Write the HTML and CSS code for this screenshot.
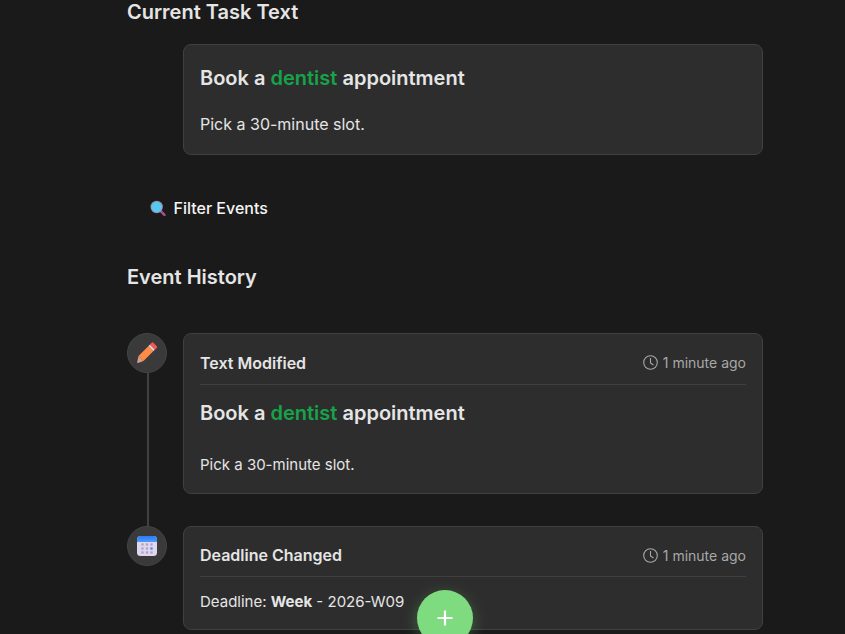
FILE: index.html
```html
<!DOCTYPE html>
<html lang="en">
<head>
<meta charset="utf-8">
<title>Task history</title>
<link rel="stylesheet" href="styles.css">
</head>
<body>
<main class="page">
  <h2 class="section-title first">Current Task Text</h2>
  <div class="indent">
    <div class="card current">
      <h3 class="task-title">Book a <span class="accent">dentist</span> appointment</h3>
      <p class="task-note">Pick a 30-minute slot.</p>
    </div>
  </div>
  <div class="filter">
    <svg class="filter-icon" width="16" height="16" viewBox="0 0 16 16" aria-hidden="true">
      <path d="M10.8 11.2l3.6 3.6" stroke="#a0508f" stroke-width="2.6" stroke-linecap="round"/>
      <circle cx="6.7" cy="7" r="6.2" fill="#9a8fb0"/>
      <circle cx="6.7" cy="7" r="5.2" fill="#58c8ee"/>
    </svg>
    <span>Filter Events</span>
  </div>
  <h2 class="section-title history">Event History</h2>
  <div class="timeline">
    <div class="event">
      <div class="rail">
        <div class="marker">
          <svg width="22" height="22" viewBox="0 0 22 22" aria-hidden="true">
            <path d="M2.500 14L12.500 4l5 5L7.500 19z" fill="#ff8b45"/>
            <path d="M2.500 14l5 5-5.500 1.900a.6.6 0 0 1-.8-.8z" fill="#d4a08c"/>
            <path d="M13.800 2.700l1.900-1.900a1.200 1.200 0 0 1 1.700 0l3.400 3.400a1.200 1.200 0 0 1 0 1.700l-1.900 1.900z" fill="#f8594f"/>
            <path d="M12.500 4l1.300-1.300 5 5-1.300 1.300z" fill="#e2dbec"/>
          </svg>
        </div>
        <div class="line"></div>
      </div>
      <div class="card">
        <div class="event-head">
          <span class="event-name">Text Modified</span>
          <span class="event-time">
            <svg width="15" height="15" viewBox="0 0 15 15" fill="none" stroke="#a8a8a8" stroke-width="1.100" aria-hidden="true"><circle cx="7.500" cy="7.500" r="6.800"/><path d="M7.500 3v5l3 2"/></svg>
            1 minute ago
          </span>
        </div>
        <h3 class="task-title event-title">Book a <span class="accent">dentist</span> appointment</h3>
        <p class="task-note small">Pick a 30-minute slot.</p>
      </div>
    </div>
    <div class="event">
      <div class="rail">
        <div class="marker">
          <svg width="22" height="22" viewBox="0 0 22 22" aria-hidden="true">
            <defs>
              <linearGradient id="calendar-top" x1="0" y1="0" x2="0" y2="1">
                <stop offset="0" stop-color="#2a78ff"/>
                <stop offset="1" stop-color="#4f9df5"/>
              </linearGradient>
            </defs>
            <rect x="1" y="1" width="20" height="20" rx="3.500" fill="#e0d6ee"/>
            <path d="M1 7V4.500A3.500 3.500 0 0 1 4.500 1h13A3.500 3.500 0 0 1 21 4.500V7z" fill="url(#calendar-top)"/>
            <g fill="#aaa2be">
              <rect x="5.400" y="8.400" width="2.200" height="2.200"/><rect x="9.900" y="8.400" width="2.200" height="2.200"/><rect x="14.400" y="8.400" width="2.200" height="2.200"/>
              <rect x="5.400" y="12.400" width="2.200" height="2.200"/><rect x="9.900" y="12.400" width="2.200" height="2.200"/>
              <rect x="5.400" y="16.400" width="2.200" height="2.200"/><rect x="9.900" y="16.400" width="2.200" height="2.200"/><rect x="14.400" y="16.400" width="2.200" height="2.200"/>
            </g>
            <rect x="14.400" y="12.400" width="2.200" height="2.200" fill="#2f8cf5"/>
          </svg>
        </div>
      </div>
      <div class="card">
        <div class="event-head compact">
          <span class="event-name">Deadline Changed</span>
          <span class="event-time">
            <svg width="15" height="15" viewBox="0 0 15 15" fill="none" stroke="#a8a8a8" stroke-width="1.100" aria-hidden="true"><circle cx="7.500" cy="7.500" r="6.800"/><path d="M7.500 3v5l3 2"/></svg>
            1 minute ago
          </span>
        </div>
        <p class="deadline">Deadline: <strong>Week</strong> - 2026-W09</p>
      </div>
    </div>
  </div>
</main>
<button class="fab" type="button" aria-label="Add">
  <svg width="18" height="18" viewBox="0 0 18 18" aria-hidden="true"><path d="M9 1.500v15M1.500 9h15" stroke="#fff" stroke-width="2.200"/></svg>
</button>
</body>
</html>
```
FILE: styles.css
```css
* { box-sizing: border-box; }
html, body { margin: 0; height: 100%; overflow: hidden; }
body {
  position: relative;
  background: #1a1a1a;
  color: #e5e5e5;
  font-family: Inter, "Liberation Sans", sans-serif;
}
.page { width: 636px; margin-left: 127px; }
.section-title { margin: 0; font-size: 20px; line-height: 24px; font-weight: 600; color: #e5e5e5; }
.first { margin-bottom: 20px; }
.indent { padding-left: 56px; }
.card {
  background: #2d2d2d;
  border: 1px solid #404040;
  border-radius: 8px;
  padding: 16px;
}
.current { height: 111px; padding-top: 15px; }
.task-title { margin: 0; font-size: 20px; line-height: 36px; font-weight: 600; color: #e5e5e5; }
.accent { color: #16a34a; }
.task-note { margin: 16px 0 0; font-size: 16px; line-height: 24px; color: #e5e5e5; }
.small { font-size: 15px; margin-top: 22px; line-height: 24px; }
.filter {
  display: flex;
  align-items: center;
  gap: 7.500px;
  margin: 42px 0 0 23px;
  height: 22px;
  font-size: 16px;
  font-weight: 500;
  color: #f5f5f5;
}
.history { margin-top: 46px; }
.timeline { margin-top: 44px; display: flex; flex-direction: column; gap: 32px; }
.event { display: flex; gap: 16px; }
.rail { position: relative; flex: 0 0 40px; }
.marker {
  width: 40px;
  height: 40px;
  border-radius: 50%;
  background: #3a3a3a;
  border: 1px solid #444;
  display: flex;
  align-items: center;
  justify-content: center;
}
.line { position: absolute; left: 20px; top: 40px; bottom: -32px; width: 2px; background: #404040; }
.event .card { flex: 1; min-width: 0; }
.event-head {
  display: flex;
  justify-content: space-between;
  align-items: center;
  padding-bottom: 9px;
  border-bottom: 1px solid #404040;
  height: 35px;
}
.compact { height: 34px; }
.event-name { font-size: 16px; font-weight: 600; color: #e5e5e5; }
.event-time { display: flex; align-items: center; gap: 5px; font-size: 14px; color: #a8a8a8; }
.event-title { margin-top: 10px; }
.deadline { margin: 14px 0 0; font-size: 15px; line-height: 22px; color: #e5e5e5; }
.deadline strong { font-weight: 700; }
.fab {
  position: absolute;
  left: 417px;
  top: 590px;
  width: 56px;
  height: 56px;
  border: 0;
  border-radius: 50%;
  background: #7fdb7f;
  box-shadow: 0 4px 16px rgba(127, 219, 127, 0.3);
  display: flex;
  align-items: center;
  justify-content: center;
  padding: 0;
}
```
